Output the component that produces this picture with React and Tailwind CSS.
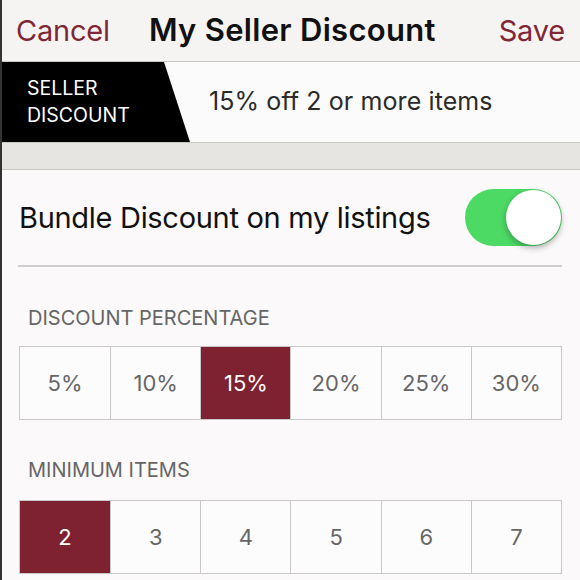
const percents = ['5%', '10%', '15%', '20%', '25%', '30%']
const items = ['2', '3', '4', '5', '6', '7']

const Segmented = ({ options, selected }) => (
  <div className="ml-[17px] mr-[18px] grid grid-cols-6 border border-[#c9c7c7] bg-[#fdfcfc]">
    {options.map((opt, i) => (
      <div
        key={opt}
        className={`flex h-[72px] items-center justify-center text-[22px] ${
          i > 0 ? 'border-l border-[#c9c7c7]' : ''
        } ${opt === selected ? 'bg-[#7e2130] text-white' : 'text-[#666]'}`}
      >
        {opt}
      </div>
    ))}
  </div>
)

export default function App() {
  return (
    <div className="h-[580px] w-[580px] overflow-hidden border-l-2 border-[#333] bg-[#fbf9f9] font-['Inter',sans-serif]">
      {/* top bar */}
      <div className="flex h-[62px] items-center border-b border-[#c8c6c4] bg-[#f5f4f3] pl-[14px] pr-[15px]">
        <span className="text-[29px] tracking-[-0.2px] text-[#7f2735]">Cancel</span>
        <span className="ml-[39px] text-[31px] font-semibold tracking-[0.3px] text-[#111]">My Seller Discount</span>
        <span className="ml-auto text-[29px] tracking-[-0.2px] text-[#7f2735]">Save</span>
      </div>

      {/* banner */}
      <div className="flex h-[80px] items-center bg-[#fcfbfb]">
        <div className="flex h-full w-[188px] flex-col justify-center bg-black pl-[25px] text-[19.5px] leading-[27px] text-white [clip-path:polygon(0_0,162px_0,188px_100%,0_100%)]">
          <span>SELLER</span>
          <span>DISCOUNT</span>
        </div>
        <span className="ml-[19px] text-[25px] tracking-[0.1px] text-[#2a2a2a]">15% off 2 or more items</span>
      </div>

      {/* beige band */}
      <div className="h-[28px] border-y border-[#c9c7c3] bg-[#e7e5e1]" />

      <div>
        <div className="flex h-[95px] items-center justify-between pl-[17px] pr-[18px]">
          <span className="text-[29px] tracking-[-0.3px] text-[#111]">Bundle Discount on my listings</span>
          <div className="flex h-[57px] w-[97px] items-center justify-end rounded-full bg-[#4cd964] pr-[1px]">
            <div className="h-[55px] w-[55px] rounded-full bg-white shadow-[0_3px_6px_rgba(0,0,0,0.3)]" />
          </div>
        </div>
        <div className="ml-[16px] mr-[18px] border-t-2 border-[#cfcdcd]" />

        <div className="pl-[26px] pb-[13px] pt-[36px] text-[20px] text-[#666]">DISCOUNT PERCENTAGE</div>
        <Segmented options={percents} selected="15%" />

        <div className="pl-[26px] pb-[15px] pt-[35px] text-[20px] text-[#666]">MINIMUM ITEMS</div>
        <Segmented options={items} selected="2" />
      </div>
    </div>
  )
}
